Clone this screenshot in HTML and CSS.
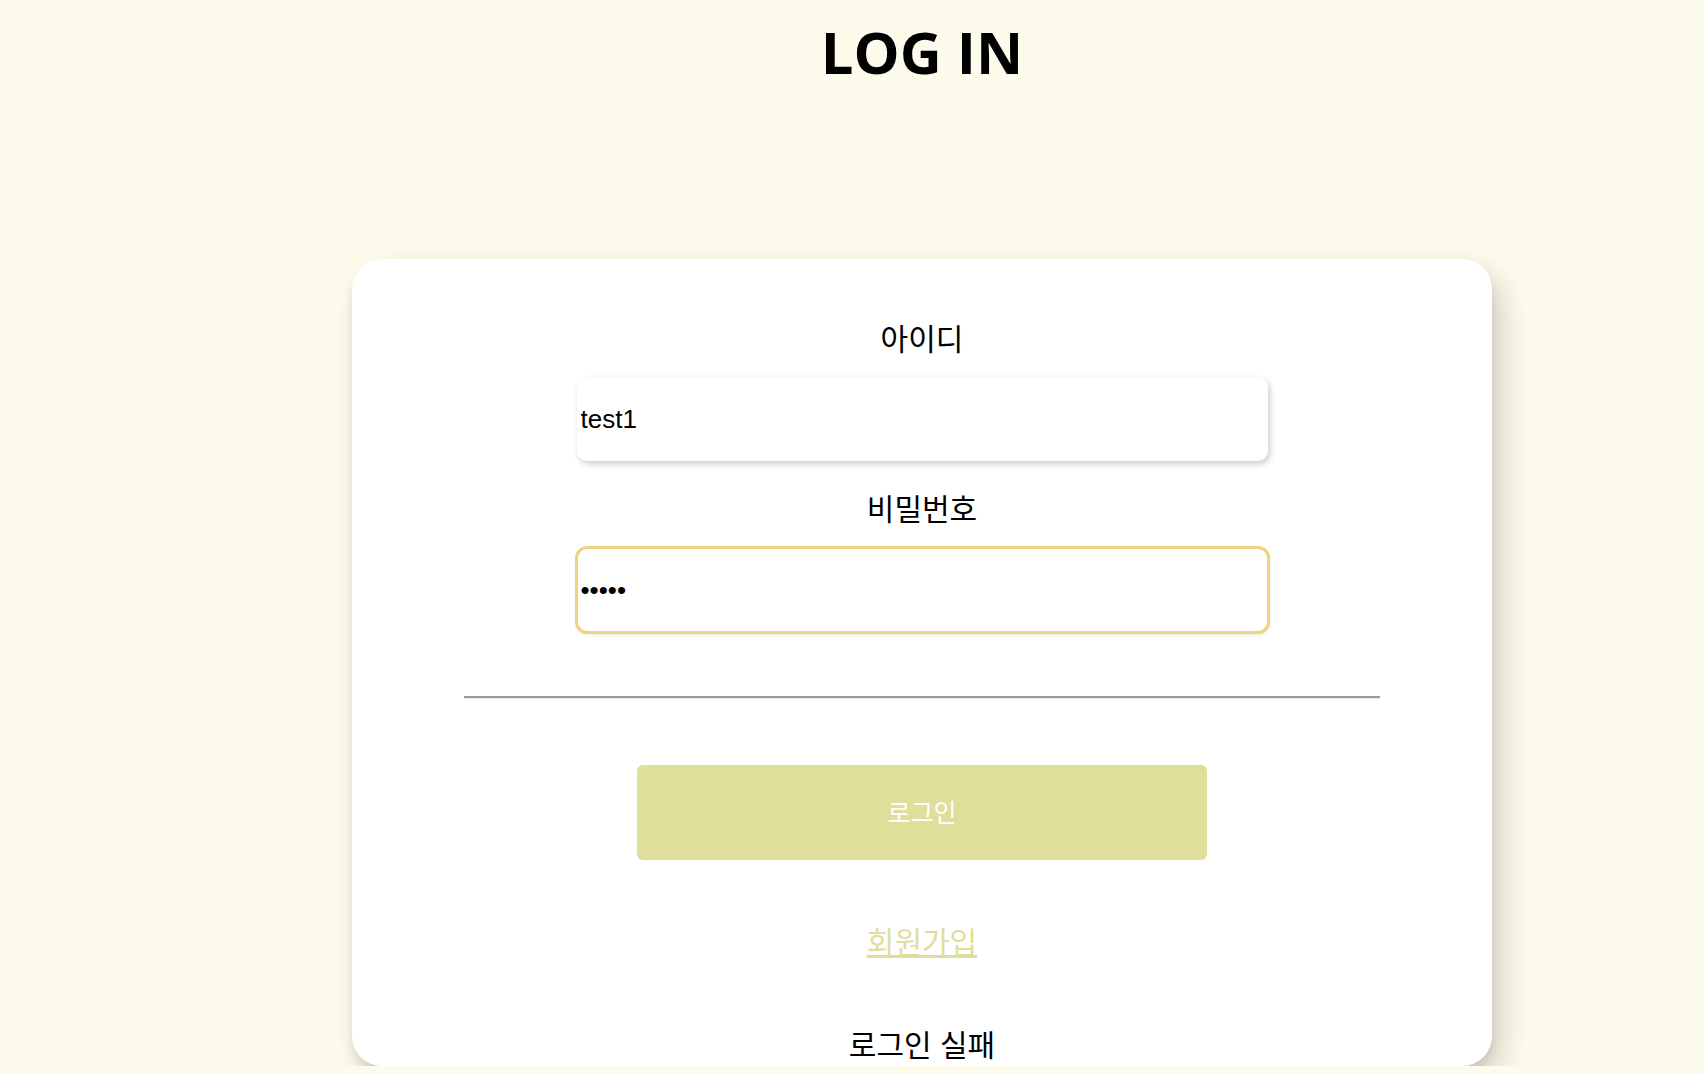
FILE: index.html
```html
<!DOCTYPE html>
<html>
<head>
    <meta charset="UTF-8">
    <title>LOG IN</title>
    <link rel="stylesheet" href="styles.css">
</head>
<body>
  <div class="page">
    <h1 class="title">LOG IN</h1>

    <div class="card">
      <form class="login-form">
        <label class="field-label" for="userId">아이디</label>
        <input class="field" type="text" id="userId" value="test1">
        <label class="field-label second" for="userPw">비밀번호</label>
        <input class="field focused" type="password" id="userPw" value="12345">

        <hr class="divider">

        <button type="button" class="login-btn">로그인</button>
        <a class="join-link" href="#">회원가입</a>
        <div class="result">로그인 실패</div>
      </form>
    </div>
  </div>
</body>
</html>
```

FILE: styles.css
```css
html {
  background-color: #fdfbeb;
}
body {
  margin: 0;
  font-family: "Liberation Sans", "Noto Sans CJK KR", sans-serif;
  color: #000;
}
.page {
  width: 1140px;
  margin-left: 352px;
}
.title {
  margin: 11px 0 166px;
  font-family: "Open Sans", sans-serif;
  font-weight: 700;
  font-size: 58px;
  line-height: 82px;
  text-align: center;
}
.card {
  background-color: #fff;
  border-radius: 30px;
  box-shadow: 10px 14px 30px rgba(0, 0, 0, 0.17), 0 8px 8px rgba(0, 0, 0, 0.08);
  padding: 61px 0 0;
}
.login-form {
  display: flex;
  flex-direction: column;
  align-items: center;
}
.field-label {
  font-size: 30px;
  line-height: 40px;
  margin-bottom: 17px;
}
.field-label.second {
  margin-top: 29px;
  margin-bottom: 18px;
}
.field {
  box-sizing: border-box;
  width: 691px;
  height: 84px;
  border: none;
  border-radius: 10px;
  padding: 0 4px;
  background: #fff;
  box-shadow: 2px 3px 6px rgba(0, 0, 0, 0.2);
  font-family: "Liberation Sans", sans-serif;
  font-size: 26px;
  color: #000;
}
.field.focused {
  outline: 3px solid #f1d27f;
  outline-offset: -1px;
  box-shadow: 1px 2px 5px rgba(0, 0, 0, 0.12);
}
.divider {
  width: 916px;
  margin: 64px 0 66px;
  border: 0;
  border-top: 2px solid #999;
  border-bottom: 1px solid #ececec;
}
.login-btn {
  width: 570px;
  height: 95px;
  border: none;
  border-radius: 6px;
  background-color: #dfde9b;
  color: #fff;
  font-family: "Noto Sans CJK KR", sans-serif;
  font-size: 25px;
  padding: 0 0 4px;
}
.join-link {
  margin-top: 63px;
  font-size: 30px;
  line-height: 40px;
  color: #dfde9b;
  text-decoration: underline;
}
.result {
  margin-top: 63px;
  font-size: 30px;
  line-height: 40px;
}
```
